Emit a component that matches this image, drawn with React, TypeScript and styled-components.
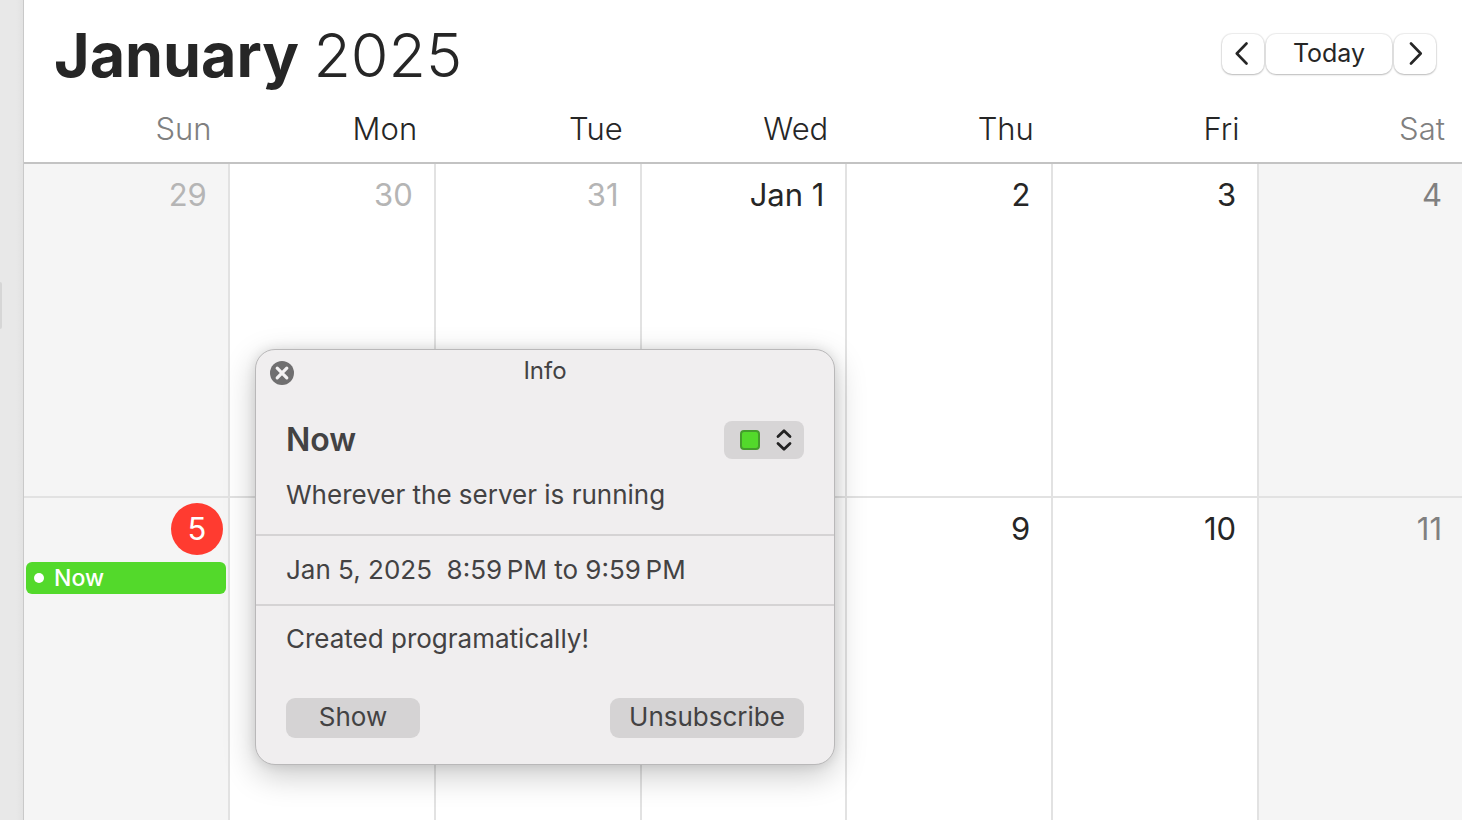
import React from "react";
import styled, { createGlobalStyle } from "styled-components";

const GlobalStyle = createGlobalStyle`
  *, *::before, *::after { box-sizing: border-box; }
  body {
    margin: 0;
    background: #fff;
    color: #262626;
    font-family: Inter, "Liberation Sans", sans-serif;
  }
  button, select { font: inherit; color: inherit; border: 0; margin: 0; padding: 0; }
`;

const Window = styled.div`
  display: flex;
  min-height: 100vh;
  overflow: hidden;
`;

const Sidebar = styled.aside`
  flex: 0 0 24px;
  background: linear-gradient(to right, #e8e8e8 70%, #e2e2e2);
  border-right: 1px solid #c9c9c9;
  padding-top: 282px;
`;

const SelectionEdge = styled.div`
  width: 2px;
  height: 47px;
  background: #d6d6d6;
  border-radius: 0 2px 2px 0;
`;

const Calendar = styled.main`
  position: relative;
  flex: 1;
  min-width: 0;
  display: flex;
  flex-direction: column;
  margin-right: -3px;
`;

const Header = styled.header`
  display: flex;
  justify-content: space-between;
  align-items: flex-start;
  padding: 15px 29px 0 30px;
`;

const Title = styled.h1`
  margin: 0;
  font-size: 61px;
  line-height: 80px;
  font-weight: 700;
  white-space: nowrap;
`;

const Year = styled.span`
  font-weight: 300;
`;

const Nav = styled.nav`
  display: flex;
  gap: 2px;
  padding-top: 19px;
`;

const NavButton = styled.button<{ $wide?: boolean }>`
  display: flex;
  align-items: center;
  justify-content: center;
  width: ${(p) => (p.$wide ? 126 : 42)}px;
  height: 40px;
  padding-bottom: 2px;
  border-radius: 10px;
  background: #fff;
  font-size: 25px;
  line-height: 32px;
  box-shadow: 0 0 1px 1px rgba(0, 0, 0, 0.07), 0 1px 2px rgba(0, 0, 0, 0.22);
`;

const Weekdays = styled.div`
  display: grid;
  grid-template-columns: repeat(7, minmax(0, 1fr));
  padding: 14px 2px 13px 0;
  border-bottom: 2px solid #c3c3c3;
`;

const Weekday = styled.div<{ $weekend: boolean }>`
  padding-right: 18px;
  text-align: right;
  font-size: 31px;
  line-height: 40px;
  font-weight: 350;
  color: ${(p) => (p.$weekend ? "#808080" : "#262626")};
`;

const Weeks = styled.div`
  flex: 1;
  display: grid;
  grid-template-columns: repeat(7, minmax(0, 1fr));
  grid-template-rows: 334px 1fr;
`;

const Day = styled.div<{ $weekend: boolean; $lastWeek: boolean }>`
  min-width: 0;
  padding: 5px 2px 0;
  border-right: 2px solid #e2e2e2;
  border-bottom: ${(p) => (p.$lastWeek ? "0" : "2px solid #e2e2e2")};
  background: ${(p) => (p.$weekend ? "#f5f5f5" : "#fff")};
`;

type Tone = "strong" | "weekend" | "faded" | "today";

const toneColors: Record<Tone, string> = {
  strong: "#262626",
  weekend: "#808080",
  faded: "#b5b5b5",
  today: "#fff",
};

const DateLabel = styled.time<{ $tone: Tone }>`
  display: block;
  width: ${(p) => (p.$tone === "today" ? "52px" : "auto")};
  margin: ${(p) => (p.$tone === "today" ? "0 3px 0 auto" : "0")};
  padding-right: ${(p) => (p.$tone === "today" ? 0 : 19)}px;
  border-radius: 50%;
  background: ${(p) => (p.$tone === "today" ? "#ff3b30" : "transparent")};
  color: ${(p) => toneColors[p.$tone]};
  text-align: ${(p) => (p.$tone === "today" ? "center" : "right")};
  font-size: 31px;
  line-height: 52px;
`;

const Event = styled.button`
  display: flex;
  align-items: center;
  gap: 10px;
  width: 100%;
  height: 32px;
  margin-top: 7px;
  padding: 0 8px;
  border-radius: 6px;
  background: #53d92b;
  color: #fff;
  font-size: 23px;
  line-height: 32px;
  font-weight: 500;
`;

const Dot = styled.span`
  width: 10px;
  height: 10px;
  border-radius: 50%;
  background: #fff;
`;

const InfoPanel = styled.section`
  position: absolute;
  left: 231px;
  top: 349px;
  width: 580px;
  border: 1px solid #b9b8b9;
  border-radius: 20px;
  background: #f0eeef;
  color: #434243;
  font-size: 26px;
  line-height: 32px;
  box-shadow: 0 10px 32px rgba(0, 0, 0, 0.22), 0 0 12px rgba(0, 0, 0, 0.1);
`;

const PanelBar = styled.div`
  display: grid;
  grid-template-columns: 1fr auto 1fr;
  align-items: start;
  padding: 11px 14px 0;
`;

const PanelTitle = styled.h2`
  margin: 0;
  font-size: 24px;
  line-height: 20px;
  font-weight: 400;
`;

const CloseButton = styled.button`
  width: 24px;
  height: 24px;
  background: none;
  svg { display: block; }
`;

const Section = styled.div<{ $top?: number; $bottom?: number }>`
  padding: ${(p) => p.$top ?? 18}px 30px ${(p) => p.$bottom ?? 18}px;
  white-space: pre-wrap;
  & + & { border-top: 2px solid #d5d3d4; }
`;

const SpreadRow = styled.div<{ $gap: number; $above?: boolean }>`
  display: flex;
  align-items: center;
  justify-content: space-between;
  margin-top: ${(p) => (p.$above ? p.$gap : 0)}px;
  margin-bottom: ${(p) => (p.$above ? 0 : p.$gap)}px;
`;

const EventTitle = styled.h3`
  margin: 0;
  font-size: 32px;
  line-height: 38px;
  font-weight: 600;
`;

const ColorPicker = styled.label`
  position: relative;
  display: flex;
  align-items: center;
  justify-content: space-between;
  width: 80px;
  height: 38px;
  padding: 0 11px 0 16px;
  border-radius: 8px;
  background: #d7d5d6;
`;

const Swatch = styled.span`
  width: 20px;
  height: 20px;
  border: 2px solid #449c2c;
  border-radius: 4px;
  background: #53d92b;
`;

const ColorSelect = styled.select`
  position: absolute;
  inset: 0;
  width: 100%;
  appearance: none;
  background: transparent;
  border-radius: 8px;
`;

const Action = styled.button<{ $wide?: boolean }>`
  width: ${(p) => (p.$wide ? 194 : 134)}px;
  height: 40px;
  padding-bottom: 2px;
  border-radius: 9px;
  background: #d5d3d4;
`;

const weekdays = ["Sun", "Mon", "Tue", "Wed", "Thu", "Fri", "Sat"];

const days: { label: string; tone: Tone; event?: string }[] = [
  { label: "29", tone: "faded" },
  { label: "30", tone: "faded" },
  { label: "31", tone: "faded" },
  { label: "Jan 1", tone: "strong" },
  { label: "2", tone: "strong" },
  { label: "3", tone: "strong" },
  { label: "4", tone: "weekend" },
  { label: "5", tone: "today", event: "Now" },
  { label: "", tone: "strong" },
  { label: "", tone: "strong" },
  { label: "", tone: "strong" },
  { label: "9", tone: "strong" },
  { label: "10", tone: "strong" },
  { label: "11", tone: "weekend" },
];

const isWeekend = (i: number) => i % 7 === 0 || i % 7 === 6;

function Chevron({ d }: { d: string }) {
  return (
    <svg width="16" height="24" viewBox="0 0 16 24" fill="none" stroke="#262626" strokeWidth="2.6" strokeLinecap="round" strokeLinejoin="round" aria-hidden="true">
      <path d={d} />
    </svg>
  );
}

export default function App() {
  return (
    <>
      <GlobalStyle />
      <Window>
        <Sidebar>
          <SelectionEdge />
        </Sidebar>
        <Calendar>
          <Header>
            <Title>
              January <Year>2025</Year>
            </Title>
            <Nav>
              <NavButton aria-label="Previous month">
                <Chevron d="M11.5 2.5 1.8 12.5 11.5 22.5" />
              </NavButton>
              <NavButton $wide>Today</NavButton>
              <NavButton aria-label="Next month">
                <Chevron d="M4 2.5 13.7 12.5 4 22.5" />
              </NavButton>
            </Nav>
          </Header>
          <Weekdays>
            {weekdays.map((name, i) => (
              <Weekday key={name} $weekend={isWeekend(i)}>
                {name}
              </Weekday>
            ))}
          </Weekdays>
          <Weeks>
            {days.map((day, i) => (
              <Day key={i} $weekend={isWeekend(i)} $lastWeek={i >= days.length - 7}>
                {day.label && <DateLabel $tone={day.tone}>{day.label}</DateLabel>}
                {day.event && (
                  <Event>
                    <Dot />
                    {day.event}
                  </Event>
                )}
              </Day>
            ))}
          </Weeks>
          <InfoPanel>
            <PanelBar>
              <CloseButton aria-label="Close">
                <svg width="24" height="24" viewBox="0 0 24 24" aria-hidden="true">
                  <circle cx="12" cy="12" r="12" fill="#706f70" />
                  <path d="M7.2 7.2l9.6 9.6M16.8 7.2l-9.6 9.6" stroke="#f4f2f3" strokeWidth="3.2" strokeLinecap="round" />
                </svg>
              </CloseButton>
              <PanelTitle>Info</PanelTitle>
            </PanelBar>
            <Section $top={36} $bottom={23}>
              <SpreadRow $gap={20}>
                <EventTitle>Now</EventTitle>
                <ColorPicker>
                  <Swatch />
                  <svg width="18" height="24" viewBox="0 0 18 24" fill="none" stroke="#222" strokeWidth="2.8" strokeLinecap="round" strokeLinejoin="round" aria-hidden="true">
                    <path d="M3 8.5 9 2.8l6 5.7M3 15.5l6 5.7 6-5.7" />
                  </svg>
                  <ColorSelect aria-label="Calendar color">
                    <option value="green" />
                  </ColorSelect>
                </ColorPicker>
              </SpreadRow>
              Wherever the server is running
            </Section>
            <Section>{"Jan 5, 2025  8:59\u2009PM to 9:59\u2009PM"}</Section>
            <Section $top={17} $bottom={26}>
              Created programatically!
              <SpreadRow $gap={43} $above>
                <Action>Show</Action>
                <Action $wide>Unsubscribe</Action>
              </SpreadRow>
            </Section>
          </InfoPanel>
        </Calendar>
      </Window>
    </>
  );
}
